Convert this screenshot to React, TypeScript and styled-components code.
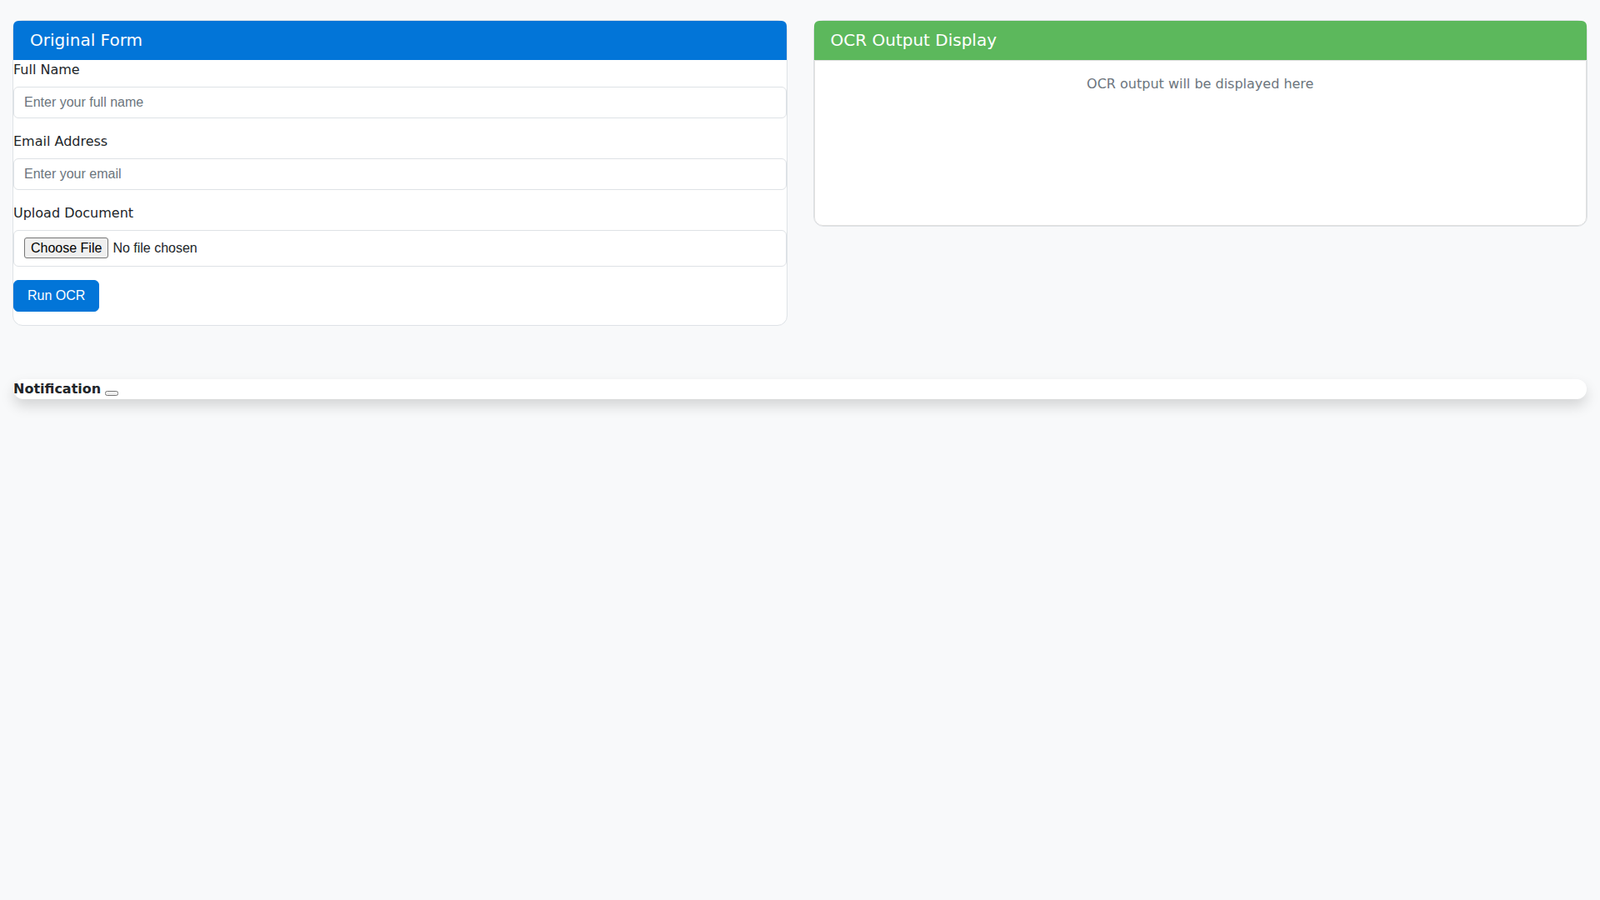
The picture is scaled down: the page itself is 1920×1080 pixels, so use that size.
import { FC } from 'react';
import styled, { createGlobalStyle } from 'styled-components';

const GlobalStyle = createGlobalStyle`
    * {
        box-sizing: border-box;
    }

    body {
        margin: 0;
        background: #f8f9fa;
        color: #212529;
        font-family: 'DejaVu Sans', sans-serif;
        font-size: 16px;
        line-height: 1.5;
    }
`;

const Page = styled.div`
    padding: 24px 15px;
`;

const Row = styled.div`
    display: grid;
    grid-template-columns: 1fr 1fr;
    gap: 31px;
    align-items: start;
`;

const Card = styled.section`
    background: #fff;
    border: 1px solid #dee2e6;
    border-radius: 12px;
`;

const CardHeader = styled.h5<{ $color: string }>`
    margin: 0;
    padding: 12px 20px;
    background: ${(p) => p.$color};
    color: #fff;
    font-size: 20px;
    font-weight: 400;
    line-height: 23px;
    border-radius: 6px 6px 0 0;
`;

const Form = styled.form`
    padding-bottom: 16px;
`;

const Field = styled.div`
    margin-bottom: 16px;
`;

const Label = styled.label`
    display: block;
    margin-bottom: 8px;
`;

const Input = styled.input`
    display: block;
    width: 100%;
    padding: 6px 12px;
    border: 1px solid #dee2e6;
    border-radius: 6px;
    background: #fff;
    color: #212529;
    font-family: 'Liberation Sans', Arial, sans-serif;
    font-size: 16px;
    line-height: 24px;

    &::placeholder {
        color: #6c757d;
    }
`;

const FileInput = styled(Input)`
    padding: 8px 12px;
    height: 44px;

    &::file-selector-button {
        margin-right: 5px;
        padding: 1px 7px;
        height: 25px;
        background: #efefef;
        border: 1px solid #767676;
        border-radius: 3px;
        color: #000;
        font-family: 'Liberation Sans', Arial, sans-serif;
        font-size: 16px;
    }
`;

const RunButton = styled.button`
    padding: 6px 16px;
    border: 1px solid #0275d8;
    border-radius: 6px;
    background: #0275d8;
    color: #fff;
    font-family: 'Liberation Sans', Arial, sans-serif;
    font-size: 16px;
    line-height: 24px;
    cursor: pointer;
`;

const OutputBox = styled.div`
    min-height: 199px;
    padding: 16px;
    border: 1px solid #dfdfdf;
    border-radius: 0 0 10px 10px;
    color: #6c757d;
    text-align: center;
`;

const Notification = styled.div`
    margin: 64px 1px 0;
    background: #fff;
    border-radius: 12px;
    box-shadow: 0 8px 16px rgba(0, 0, 0, 0.15);
`;

const App: FC = () => {
    return (
        <>
            <GlobalStyle />
            <Page>
                <Row>
                    <Card>
                        <CardHeader $color="#0275d8">Original Form</CardHeader>
                        <Form onSubmit={(e) => e.preventDefault()}>
                            <Field>
                                <Label htmlFor="fullName">Full Name</Label>
                                <Input id="fullName" type="text" placeholder="Enter your full name" />
                            </Field>
                            <Field>
                                <Label htmlFor="email">Email Address</Label>
                                <Input id="email" type="email" placeholder="Enter your email" />
                            </Field>
                            <Field>
                                <Label htmlFor="document">Upload Document</Label>
                                <FileInput id="document" type="file" />
                            </Field>
                            <RunButton type="submit">Run OCR</RunButton>
                        </Form>
                    </Card>
                    <Card>
                        <CardHeader $color="#5cb85c">OCR Output Display</CardHeader>
                        <OutputBox>OCR output will be displayed here</OutputBox>
                    </Card>
                </Row>
                <Notification>
                    <strong>Notification</strong> <button type="button"></button>
                </Notification>
            </Page>
        </>
    );
};

export default App;
